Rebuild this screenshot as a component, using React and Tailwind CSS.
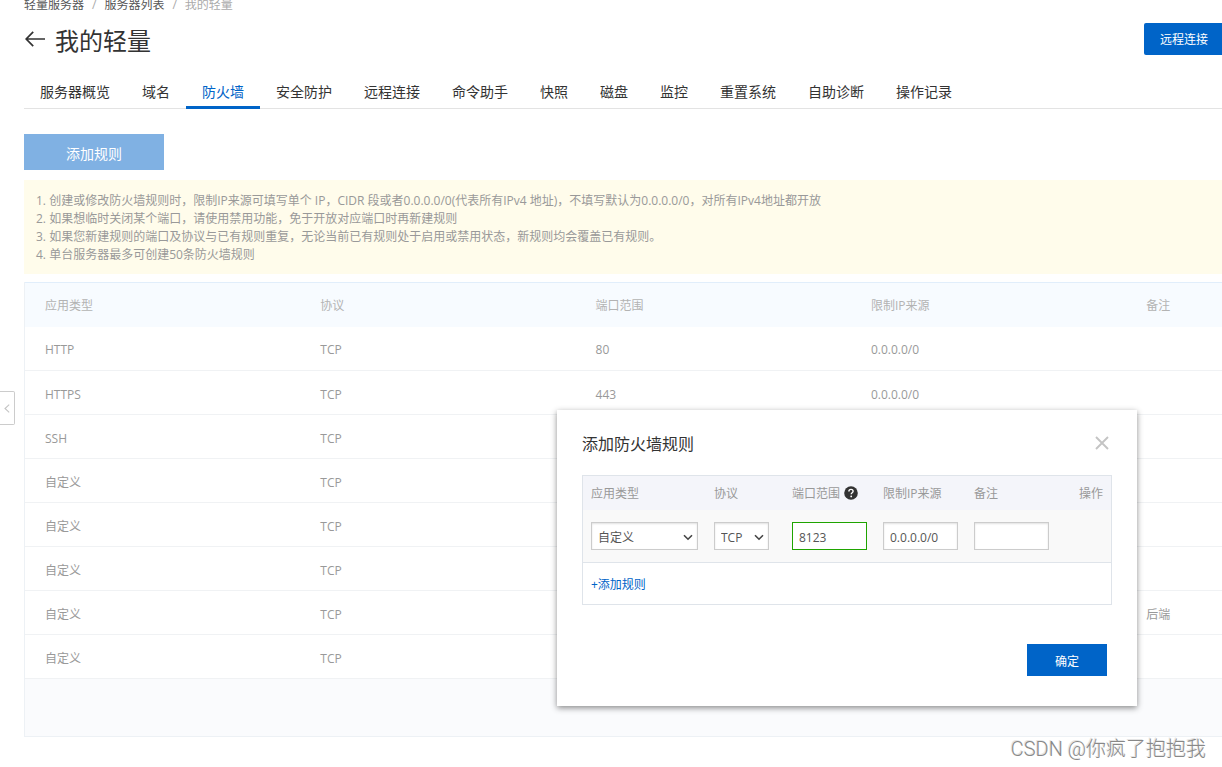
import React, { useState } from "react";

const TABS = [
  "服务器概览",
  "域名",
  "防火墙",
  "安全防护",
  "远程连接",
  "命令助手",
  "快照",
  "磁盘",
  "监控",
  "重置系统",
  "自助诊断",
  "操作记录",
];

const NOTICES = [
  "1. 创建或修改防火墙规则时，限制IP来源可填写单个 IP，CIDR 段或者0.0.0.0/0(代表所有IPv4 地址)，不填写默认为0.0.0.0/0，对所有IPv4地址都开放",
  "2. 如果想临时关闭某个端口，请使用禁用功能，免于开放对应端口时再新建规则",
  "3. 如果您新建规则的端口及协议与已有规则重复，无论当前已有规则处于启用或禁用状态，新规则均会覆盖已有规则。",
  "4. 单台服务器最多可创建50条防火墙规则",
];

const RULES = [
  { id: 1, type: "HTTP", protocol: "TCP", port: "80", source: "0.0.0.0/0", remark: "" },
  { id: 2, type: "HTTPS", protocol: "TCP", port: "443", source: "0.0.0.0/0", remark: "" },
  { id: 3, type: "SSH", protocol: "TCP", port: "", source: "", remark: "" },
  { id: 4, type: "自定义", protocol: "TCP", port: "", source: "", remark: "" },
  { id: 5, type: "自定义", protocol: "TCP", port: "", source: "", remark: "" },
  { id: 6, type: "自定义", protocol: "TCP", port: "", source: "", remark: "" },
  { id: 7, type: "自定义", protocol: "TCP", port: "", source: "", remark: "后端" },
  { id: 8, type: "自定义", protocol: "TCP", port: "", source: "", remark: "" },
];

function Header() {
  return (
    <header>
      <nav className="flex h-[13px] items-end gap-2 text-xs leading-4 text-[#555]">
        <a href="#servers">轻量服务器</a>
        <span className="text-[#aaa]">/</span>
        <a href="#list">服务器列表</a>
        <span className="text-[#aaa]">/</span>
        <span className="text-[#aaa]">我的轻量</span>
      </nav>
      <div className="mt-2.5 flex items-center justify-between">
        <div className="flex items-center gap-2">
          <button type="button" aria-label="返回">
            <svg width="23" height="18" viewBox="0 0 23 18" fill="none" stroke="#333" strokeWidth="1.7">
              <path d="M9.2 1.8 2.2 9l7 7.2M2.2 9H21" />
            </svg>
          </button>
          <h1 className="h-8 text-2xl leading-9 text-[#333]">我的轻量</h1>
        </div>
        <button
          type="button"
          className="h-8 rounded-l-xs bg-[#0064c8] pl-4 pr-3.5 pt-0.5 text-xs text-white"
        >
          远程连接
        </button>
      </div>
    </header>
  );
}

function RuleTable() {
  return (
    <div className="mt-2 border-l border-[#edf1f5]">
      <table className="w-full table-fixed text-left text-xs text-[#999]">
        <thead>
          <tr className="h-11 border-t border-[#e1eefb] bg-[#f7fbff] text-[#b3b3b3]">
            <th className="w-[23%] px-5 pt-0.5 font-normal">应用类型</th>
            <th className="w-[23%] px-5 pt-0.5 font-normal">协议</th>
            <th className="w-[23%] px-5 pt-0.5 font-normal">端口范围</th>
            <th className="w-[23%] px-5 pt-0.5 font-normal">限制IP来源</th>
            <th className="px-5 pt-0.5 font-normal">备注</th>
          </tr>
        </thead>
        <tbody>
          {RULES.map((rule) => (
            <tr key={rule.id} className="h-11 border-b border-[#f0f2f4]">
              <td className="px-5 pt-1">{rule.type}</td>
              <td className="px-5 pt-1">{rule.protocol}</td>
              <td className="px-5 pt-1">{rule.port}</td>
              <td className="px-5 pt-1">{rule.source}</td>
              <td className="px-5 pt-1">{rule.remark}</td>
            </tr>
          ))}
        </tbody>
      </table>
      <div className="h-[58px] border-b border-[#edf1f5] bg-[#fafbfd]" />
    </div>
  );
}

function HelpIcon() {
  return (
    <svg width="14" height="14" viewBox="0 0 14 14" fill="none">
      <circle cx="7" cy="7" r="6.8" fill="#333" />
      <path d="M4.9 5.5c0-1.3.9-2.1 2.1-2.1s2.1.8 2.1 1.9c0 1.5-1.9 1.5-1.9 3" stroke="#fff" strokeWidth="1.4" />
      <circle cx="7.2" cy="10.4" r="0.9" fill="#fff" />
    </svg>
  );
}

function SelectField({ label, value, options, onChange }) {
  return (
    <div className="relative">
      <select
        aria-label={label}
        value={value}
        onChange={(e) => onChange(e.target.value)}
        className="block h-7 w-full appearance-none border border-[#ccc] bg-white px-1.5 pt-1 text-xs text-[#555] shadow-[inset_0_1px_2px_rgba(0,0,0,0.12)]"
      >
        {options.map((option) => (
          <option key={option}>{option}</option>
        ))}
      </select>
      <svg
        className="pointer-events-none absolute right-[5px] top-3"
        width="10"
        height="7"
        viewBox="0 0 10 7"
        fill="none"
        stroke="#444"
        strokeWidth="1.6"
      >
        <path d="M1 1.2l4 4 4-4" />
      </svg>
    </div>
  );
}

function AddRuleDialog() {
  const [type, setType] = useState("自定义");
  const [protocol, setProtocol] = useState("TCP");
  const [port, setPort] = useState("8123");
  const [source, setSource] = useState("0.0.0.0/0");
  const [remark, setRemark] = useState("");

  const fieldClass =
    "block h-7 w-full border border-[#ccc] bg-white px-1.5 pt-1 text-xs text-[#555] shadow-[inset_0_1px_2px_rgba(0,0,0,0.12)] outline-none";

  return (
    <section
      role="dialog"
      aria-labelledby="dialog-title"
      className="absolute right-[85px] top-[410px] w-[580px] bg-white px-[25px] pb-[30px] pt-5 shadow-[0_2px_6px_rgba(0,0,0,0.45)]"
    >
      <div className="flex items-center justify-between pr-[3px]">
        <h2 id="dialog-title" className="text-base leading-7 text-[#333]">
          添加防火墙规则
        </h2>
        <button type="button" aria-label="关闭" className="pb-0.5">
          <svg className="block" width="14" height="14" viewBox="0 0 14 14" stroke="#c4c4c4" strokeWidth="1.9">
            <path d="M1 1l12 12M13 1 1 13" />
          </svg>
        </button>
      </div>

      <div className="mt-[17px] border border-[#dfe4ea]">
        <table className="w-full table-fixed text-left text-xs">
          <thead>
            <tr className="h-[34px] bg-[#f4f5fa] text-[#999]">
              <th className="w-[123px] px-2 pt-0.5 font-normal">应用类型</th>
              <th className="w-[78px] px-2 pt-0.5 font-normal">协议</th>
              <th className="w-[91px] pl-2 pt-0.5 font-normal">
                <span className="flex items-start gap-1 whitespace-nowrap">
                  端口范围
                  <HelpIcon />
                </span>
              </th>
              <th className="w-[91px] px-2 pt-0.5 font-normal">限制IP来源</th>
              <th className="w-[91px] px-2 pt-0.5 font-normal">备注</th>
              <th className="px-2 pt-0.5 text-right font-normal">操作</th>
            </tr>
          </thead>
          <tbody>
            <tr className="h-[52px] border-b border-[#dfe4ea] bg-[#f9f9f9]">
              <td className="px-2">
                <SelectField
                  label="应用类型"
                  value={type}
                  options={["自定义", "HTTP", "HTTPS", "SSH"]}
                  onChange={setType}
                />
              </td>
              <td className="pl-2 pr-[15px]">
                <SelectField
                  label="协议"
                  value={protocol}
                  options={["TCP", "UDP"]}
                  onChange={setProtocol}
                />
              </td>
              <td className="px-2">
                <input
                  aria-label="端口范围"
                  value={port}
                  onChange={(e) => setPort(e.target.value)}
                  className="block h-7 w-full border border-[#1fa400] bg-white px-1.5 pt-1 text-xs text-[#555] outline-none"
                />
              </td>
              <td className="px-2">
                <input
                  aria-label="限制IP来源"
                  value={source}
                  onChange={(e) => setSource(e.target.value)}
                  className={fieldClass}
                />
              </td>
              <td className="px-2">
                <input
                  aria-label="备注"
                  value={remark}
                  onChange={(e) => setRemark(e.target.value)}
                  className={fieldClass}
                />
              </td>
              <td />
            </tr>
          </tbody>
        </table>
        <button type="button" className="block h-[41px] px-2 pt-1 text-xs text-[#0064c8]">
          +添加规则
        </button>
      </div>

      <div className="mt-[39px] flex justify-end pr-[5px]">
        <button type="button" className="h-8 w-20 bg-[#0064c8] pt-1 text-xs text-white">
          确定
        </button>
      </div>
    </section>
  );
}

function App() {
  const [activeTab, setActiveTab] = useState("防火墙");

  return (
    <div className="relative min-h-screen overflow-hidden bg-white pl-6 font-['Open_Sans','Noto_Sans_CJK_SC',sans-serif]">
      <Header />

      <nav className="mt-5 flex border-b border-[#e3e3e3] text-sm text-[#333]">
        {TABS.map((tab) => (
          <button
            key={tab}
            type="button"
            onClick={() => setActiveTab(tab)}
            className={
              tab === activeTab
                ? "-mb-px h-[34px] border-b-3 border-[#0064c8] px-4 pt-0.5 text-[#0064c8]"
                : "-mb-px h-[34px] border-b-3 border-transparent px-4 pt-0.5"
            }
          >
            {tab}
          </button>
        ))}
      </nav>

      <main>
        <button type="button" className="mt-[25px] block h-9 w-[140px] bg-[#80b1e3] pt-1 text-sm text-white">
          添加规则
        </button>
        <div className="mt-2.5 bg-[#fffceb] px-3 pb-2.5 pt-3 text-xs leading-[18px] text-[#999]">
          {NOTICES.map((notice) => (
            <p key={notice}>{notice}</p>
          ))}
        </div>
        <RuleTable />
      </main>

      <button
        type="button"
        aria-label="收起"
        className="absolute left-0 top-[391px] flex h-[34px] w-[15px] items-center justify-center rounded-r-xs border border-l-0 border-[#ccc] bg-white"
      >
        <svg width="6" height="9" viewBox="0 0 6 9" fill="none" stroke="#c4c4c4" strokeWidth="1.1">
          <path d="M5.2.7 1 4.5l4.2 3.8" />
        </svg>
      </button>

      <AddRuleDialog />

      <p className="absolute bottom-1 right-4 font-['Roboto','Noto_Sans_CJK_SC',sans-serif] text-xl leading-7 font-light text-[#888] [text-shadow:-1px_-1px_0_#e4e4e4]">
        CSDN @你疯了抱抱我
      </p>
    </div>
  );
}

export default App;
